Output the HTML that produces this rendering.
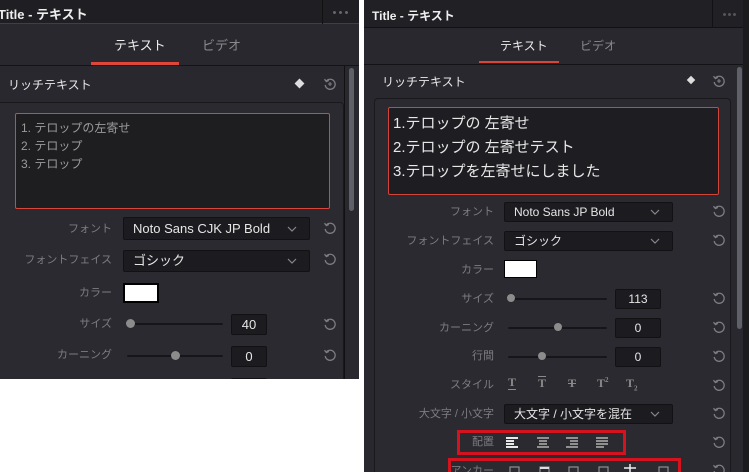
<!DOCTYPE html>
<html><head><meta charset="utf-8"><style>
*{margin:0;padding:0;box-sizing:border-box}
body{width:749px;height:472px;background:#fff;position:relative;overflow:hidden;font-family:"Liberation Sans","Noto Sans CJK JP",sans-serif}
.p{position:absolute;background:#28282e;overflow:hidden}
.a{position:absolute;white-space:nowrap}
.lbl{position:absolute;color:#7c7c82;font-size:11px;text-align:right;white-space:nowrap;line-height:14px}
.dd{position:absolute;background:#1c1c20;border:1px solid #121214;border-radius:2px;color:#e6e6e6;font-size:12px;line-height:18px;padding-left:9px}
.dd svg{position:absolute;right:12px;top:50%;margin-top:-3px}
.inp{position:absolute;background:#1c1c20;border:1px solid #121214;border-radius:2px;color:#e6e6e6;font-size:12px;text-align:center}
.tr{position:absolute;height:2px;background:#16161a;border-radius:1px}
.kn{position:absolute;width:9px;height:9px;border-radius:50%;background:#8c8c8c}
.rs{position:absolute;width:14px;height:14px}
.dots{position:absolute;width:3px;height:3px;border-radius:50%;background:#666}
</style></head><body>
<svg width="0" height="0" style="position:absolute"><defs>
<symbol id="r" viewBox="0 0 14 14"><path d="M3.2 4.2A5 5 0 1 1 2.2 8" fill="none" stroke="#7d7d82" stroke-width="1.3"/><path d="M1.5 2.2L3.4 4.6L5.9 3.4" fill="none" stroke="#7d7d82" stroke-width="1.3"/></symbol>
<symbol id="rp" viewBox="0 0 14 14"><path d="M3.2 4.2A5 5 0 1 1 2.2 8" fill="none" stroke="#7d7d82" stroke-width="1.3"/><path d="M1.5 2.2L3.4 4.6L5.9 3.4" fill="none" stroke="#7d7d82" stroke-width="1.3"/><path d="M7 5v4M5 7h4" stroke="#7d7d82" stroke-width="1.1"/></symbol>
<symbol id="cv" viewBox="0 0 10 6"><path d="M1 1l4 4 4-4" fill="none" stroke="#888" stroke-width="1.2"/></symbol>
</defs></svg>

<!-- LEFT PANEL -->
<div class="p" style="left:0;top:0;width:359px;height:379px">
 <div class="a" style="left:0;top:0;width:359px;height:24px;background:#1f1f23"></div>
 <div class="a" style="left:0;top:23px;width:359px;height:1px;background:#8a2020"></div>
 <div class="a" style="left:-2px;top:4px;color:#eee;font-size:13px;font-weight:bold">Title - テキスト</div>
 <div class="a" style="left:322px;top:0;width:1px;height:24px;background:#111"></div>
 <div class="dots" style="left:333px;top:11px"></div><div class="dots" style="left:339px;top:11px"></div><div class="dots" style="left:345px;top:11px"></div>
 <div class="a" style="left:0;top:65px;width:359px;height:1px;background:#141416"></div>
 <div class="a" style="left:114px;top:35px;color:#eee;font-size:13px">テキスト</div>
 <div class="a" style="left:202px;top:35px;color:#8a8a8e;font-size:13px">ビデオ</div>
 <div class="a" style="left:91px;top:62px;width:88px;height:3px;background:#e0453a"></div>
 <div class="a" style="left:349px;top:68px;width:5px;height:143px;background:#5e6168;border-radius:3px"></div>
 <div class="a" style="left:344px;top:66px;width:1px;height:313px;background:#111"></div>
 <div class="a" style="left:8px;top:76px;color:#e8e8e8;font-size:12px">リッチテキスト</div>
 <div class="a" style="left:296px;top:80px;width:7px;height:7px;background:#ddd;transform:rotate(45deg)"></div>
 <svg class="rs" style="left:323px;top:77px"><use href="#rp"/></svg>
 <div class="a" style="left:-5px;top:102px;width:349px;height:280px;border:1px solid #19191c;border-radius:4px;background:#2a2a30"></div>
 <div class="a" style="left:15px;top:113px;width:315px;height:96px;border:1px solid #d9453a;border-radius:2px;background:#1e1e21;color:#9a9a9a;font-size:12px;line-height:18px;padding:5px 0 0 5px">1. テロップの左寄せ<br>2. テロップ<br>3. テロップ</div>
 <div class="lbl" style="right:247px;top:222px">フォント</div>
 <div class="dd" style="left:123px;top:217px;width:187px;height:23px;font-size:13px;line-height:21px">Noto Sans CJK JP Bold<svg width="10" height="6"><use href="#cv"/></svg></div>
 <svg class="rs" style="left:323px;top:221px"><use href="#r"/></svg>
 <div class="lbl" style="right:247px;top:253px">フォントフェイス</div>
 <div class="dd" style="left:123px;top:250px;width:187px;height:22px;font-size:13px;line-height:20px">ゴシック<svg width="10" height="6"><use href="#cv"/></svg></div>
 <svg class="rs" style="left:323px;top:252px"><use href="#r"/></svg>
 <div class="lbl" style="right:247px;top:286px">カラー</div>
 <div class="a" style="left:123px;top:283px;width:36px;height:20px;background:#fff;border:2px solid #000"></div>
 <div class="lbl" style="right:247px;top:317px">サイズ</div>
 <div class="tr" style="left:127px;top:323px;width:96px"></div><div class="kn" style="left:126px;top:319px"></div>
 <div class="inp" style="left:231px;top:314px;width:36px;height:21px;line-height:19px;font-size:13px">40</div>
 <svg class="rs" style="left:323px;top:317px"><use href="#r"/></svg>
 <div class="lbl" style="right:247px;top:348px">カーニング</div>
 <div class="tr" style="left:127px;top:355px;width:96px"></div><div class="kn" style="left:171px;top:351px"></div>
 <div class="inp" style="left:231px;top:346px;width:36px;height:21px;line-height:19px;font-size:13px">0</div>
 <svg class="rs" style="left:323px;top:348px"><use href="#r"/></svg>
 <div class="inp" style="left:231px;top:378px;width:36px;height:21px"></div>
</div>

<!-- RIGHT PANEL -->
<div class="p" style="left:364px;top:0;width:385px;height:472px">
 <div class="a" style="left:0;top:0;width:385px;height:27px;background:#202025"></div>
 <div class="a" style="left:0;top:27px;width:385px;height:1px;background:#121214"></div>
 <div class="a" style="left:8px;top:7px;color:#eee;font-size:12px;font-weight:bold">Title - テキスト</div>
 <div class="a" style="left:348px;top:0;width:1px;height:27px;background:#121214"></div>
 <div class="dots" style="left:359px;top:13px;background:#555"></div><div class="dots" style="left:364px;top:13px;background:#555"></div><div class="dots" style="left:369px;top:13px;background:#555"></div>
 <div class="a" style="left:379px;top:0;width:6px;height:472px;background:#1b1b1e"></div>
 <div class="a" style="left:0;top:64px;width:379px;height:1px;background:#131315"></div>
 <div class="a" style="left:136px;top:37px;color:#eee;font-size:12px">テキスト</div>
 <div class="a" style="left:216px;top:37px;color:#8a8a8e;font-size:12px">ビデオ</div>
 <div class="a" style="left:115px;top:61px;width:80px;height:2px;background:#d8453a"></div>
 <div class="a" style="left:373px;top:67px;width:5px;height:262px;background:#5e6168;border-radius:3px"></div>
 <div class="a" style="left:18px;top:73px;color:#e8e8e8;font-size:12px">リッチテキスト</div>
 <div class="a" style="left:324px;top:77px;width:6px;height:6px;background:#ddd;transform:rotate(45deg)"></div>
 <svg class="rs" style="left:348px;top:74px"><use href="#rp"/></svg>
 <div class="a" style="left:10px;top:98px;width:357px;height:380px;border:1px solid #19191c;border-radius:4px;background:#2a2a30"></div>
 <div class="a" style="left:24px;top:107px;width:331px;height:88px;border:1px solid #d0443a;border-radius:2px;background:#1e1e22;color:#e8e8e8;font-size:15px;line-height:24px;padding:4px 0 0 4px">1.テロップの 左寄せ<br>2.テロップの 左寄せテスト<br>3.テロップを左寄せにしました</div>
 <div class="lbl" style="right:255px;top:205px">フォント</div>
 <div class="dd" style="left:140px;top:202px;width:169px;height:20px">Noto Sans JP Bold<svg width="10" height="6"><use href="#cv"/></svg></div>
 <svg class="rs" style="left:348px;top:204px"><use href="#r"/></svg>
 <div class="lbl" style="right:255px;top:234px">フォントフェイス</div>
 <div class="dd" style="left:140px;top:231px;width:169px;height:20px">ゴシック<svg width="10" height="6"><use href="#cv"/></svg></div>
 <svg class="rs" style="left:348px;top:233px"><use href="#r"/></svg>
 <div class="lbl" style="right:255px;top:263px">カラー</div>
 <div class="a" style="left:140px;top:260px;width:33px;height:18px;background:#fff;border:1px solid #000"></div>
 <div class="lbl" style="right:255px;top:292px">サイズ</div>
 <div class="tr" style="left:144px;top:298px;width:99px"></div><div class="kn" style="left:143px;top:294px;width:8px;height:8px"></div>
 <div class="inp" style="left:251px;top:289px;width:46px;height:20px;line-height:18px">113</div>
 <svg class="rs" style="left:348px;top:291px"><use href="#r"/></svg>
 <div class="lbl" style="right:255px;top:321px">カーニング</div>
 <div class="tr" style="left:144px;top:327px;width:99px"></div><div class="kn" style="left:190px;top:323px;width:8px;height:8px"></div>
 <div class="inp" style="left:251px;top:318px;width:46px;height:20px;line-height:18px">0</div>
 <svg class="rs" style="left:348px;top:320px"><use href="#r"/></svg>
 <div class="lbl" style="right:255px;top:349px">行間</div>
 <div class="tr" style="left:144px;top:356px;width:99px"></div><div class="kn" style="left:174px;top:352px;width:8px;height:8px"></div>
 <div class="inp" style="left:251px;top:347px;width:46px;height:20px;line-height:18px">0</div>
 <svg class="rs" style="left:348px;top:349px"><use href="#r"/></svg>
 <div class="lbl" style="right:255px;top:378px">スタイル</div>
 <div class="a" style="left:144px;top:376px;color:#8a8a8a;font-family:'Liberation Serif',serif;font-weight:bold;font-size:12px">
  <span style="position:absolute;left:0;border-bottom:1px solid #8a8a8a;line-height:13px">T</span>
  <span style="position:absolute;left:30px;border-top:1px solid #8a8a8a;line-height:13px">T</span>
  <span style="position:absolute;left:60px;text-decoration:line-through">T</span>
  <span style="position:absolute;left:89px">T<sup style="font-size:7px">2</sup></span>
  <span style="position:absolute;left:118px">T<sub style="font-size:7px">2</sub></span>
 </div>
 <svg class="rs" style="left:348px;top:378px"><use href="#r"/></svg>
 <div class="lbl" style="right:255px;top:407px">大文字 / 小文字</div>
 <div class="dd" style="left:140px;top:404px;width:169px;height:20px">大文字 / 小文字を混在<svg width="10" height="6"><use href="#cv"/></svg></div>
 <svg class="rs" style="left:348px;top:406px"><use href="#r"/></svg>
 <div class="lbl" style="right:255px;top:435px">配置</div>
 <svg class="a" style="left:140px;top:436px" width="110" height="12">
  <g fill="#e8e8e8"><rect x="2" y="1" width="12" height="2"/><rect x="2" y="4" width="8" height="2"/><rect x="2" y="7" width="8" height="2"/><rect x="2" y="10" width="12" height="2"/></g>
  <g fill="#909090"><rect x="33" y="1" width="12" height="2"/><rect x="35" y="4" width="8" height="2"/><rect x="35" y="7" width="8" height="2"/><rect x="33" y="10" width="12" height="2"/>
  <rect x="62" y="1" width="12" height="2"/><rect x="66" y="4" width="8" height="2"/><rect x="66" y="7" width="8" height="2"/><rect x="62" y="10" width="12" height="2"/>
  <rect x="92" y="1" width="12" height="2"/><rect x="92" y="4" width="12" height="2"/><rect x="92" y="7" width="12" height="2"/><rect x="92" y="10" width="8" height="2"/></g>
 </svg>
 <svg class="rs" style="left:348px;top:435px"><use href="#r"/></svg>
 <div class="lbl" style="right:255px;top:464px">アンカー</div>
 <svg class="a" style="left:140px;top:464px" width="170" height="10">
  <g fill="none" stroke="#909090" stroke-width="1.2"><rect x="6" y="3" width="9" height="8"/><rect x="36" y="3" width="9" height="8"/><rect x="65" y="3" width="9" height="8"/><rect x="95" y="3" width="9" height="8"/><rect x="155" y="3" width="9" height="8"/></g>
  <rect x="36" y="3" width="9" height="2" fill="#ddd"/><path d="M126 0v10M120 4h12" stroke="#eee" stroke-width="1.5"/>
 </svg>
 <svg class="rs" style="left:348px;top:463px"><use href="#r"/></svg>
 <div class="a" style="left:93px;top:430px;width:169px;height:25px;border:3px solid #d5131f"></div>
 <div class="a" style="left:84px;top:458px;width:233px;height:30px;border:3px solid #d5131f"></div>
</div>
</body></html>
